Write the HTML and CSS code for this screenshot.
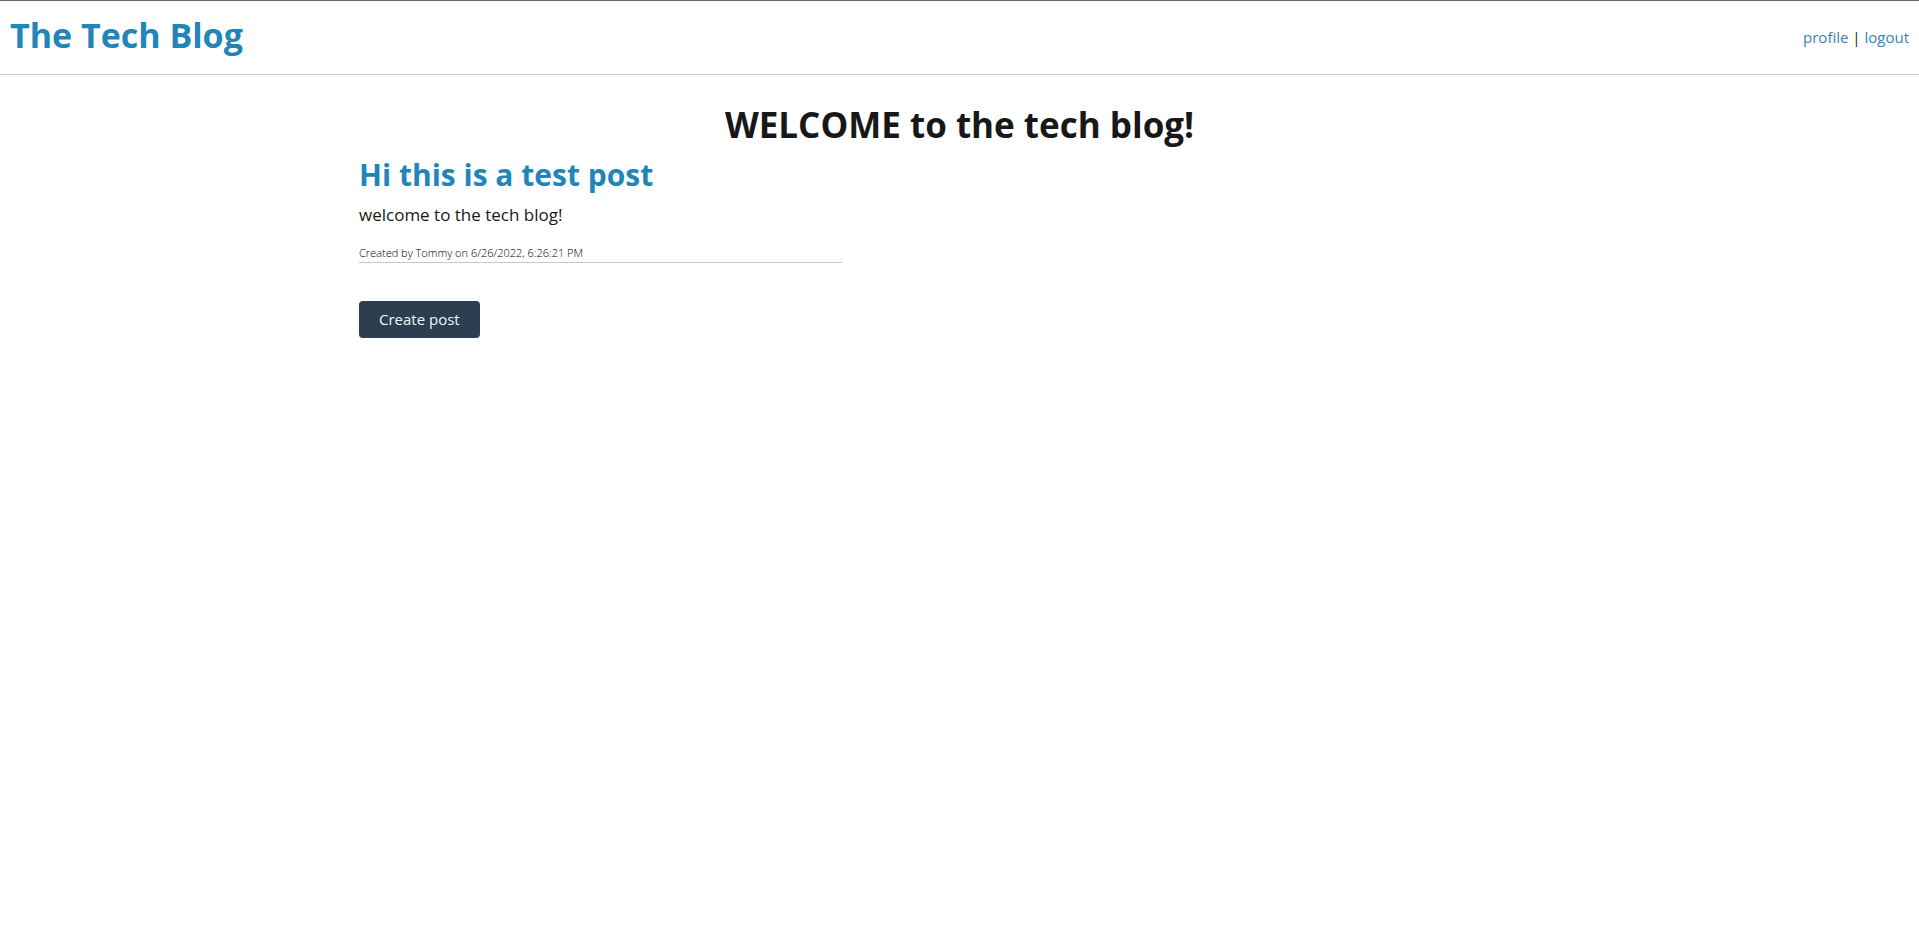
FILE: index.html
```
<!DOCTYPE html>
<html lang="en">
<head>
<meta charset="utf-8">
<title>The Tech Blog</title>
<link rel="stylesheet" href="styles.css">
</head>
<body>
<header class="site-header">
  <h1 class="brand"><a class="link" href="#">The Tech Blog</a></h1>
  <nav class="site-nav"><a class="link" href="#">profile</a> | <a class="link" href="#">logout</a></nav>
</header>
<main class="container">
  <h1 class="welcome">WELCOME to the tech blog!</h1>
  <div class="posts">
    <article class="post">
      <h2 class="post-title"><a class="link" href="#">Hi this is a test post</a></h2>
      <p class="post-text">welcome to the tech blog!</p>
      <p class="post-meta">Created by Tommy on 6/26/2022, 6:26:21 PM</p>
    </article>
    <button class="create" type="button">Create post</button>
  </div>
</main>
</body>
</html>
```
FILE: styles.css
```
* { box-sizing: border-box; }
body {
  margin: 0;
  border-top: 1px solid #66706e;
  background: #fff;
  color: #181818;
  font: 15px/24px "Open Sans", "Noto Sans", sans-serif;
}
h1, h2, p { margin: 0; }
.link { color: #2185b9; text-decoration: none; }
.site-header {
  display: flex;
  justify-content: space-between;
  align-items: center;
  padding: 10px 10px 15px;
  border-bottom: 1px solid #c8c8c8;
}
.brand { font-size: 34px; line-height: 48px; font-weight: 700; }
.site-nav { padding-top: 4px; white-space: nowrap; }
.site-nav .link { color: #3a82b4; }
.container { max-width: 1201px; margin: 0 auto; padding: 26px 0; }
.welcome { text-align: center; font-size: 35px; line-height: 48px; }
.posts { width: 483px; max-width: 100%; }
.post { border-bottom: 1px solid #c8c8c8; }
.post-title { font-size: 30px; line-height: 52px; }
.post-text { font-size: 17px; line-height: 28px; }
.post-meta { padding-top: 15px; font-size: 11px; line-height: 18px; font-weight: 300; color: #000; }
.create {
  margin-top: 38px;
  padding: 6px 20px 7px;
  border: 0;
  border-radius: 4px;
  background: #2c3e50;
  color: #e8fafa;
  font: inherit;
}
```
